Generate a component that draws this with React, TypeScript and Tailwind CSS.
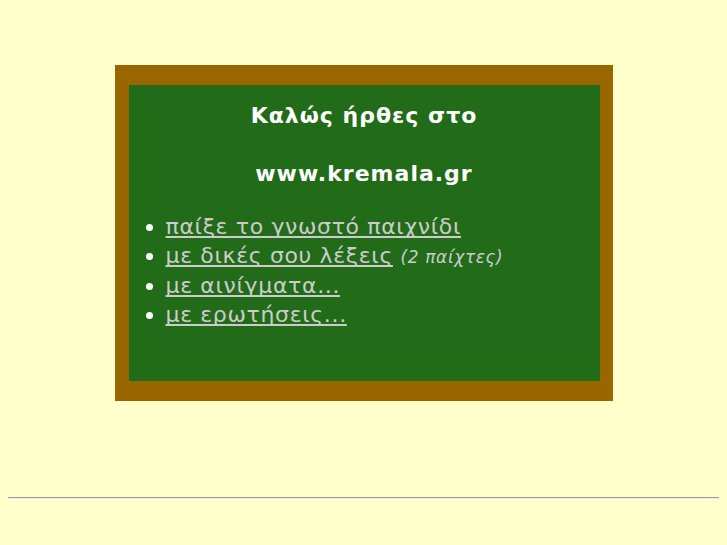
export default function App() {
  const f = { fontFamily: '"DejaVu Sans", sans-serif' };
  const a = "text-[#cccccc] underline underline-offset-[2px] [text-decoration-skip-ink:none]";
  return (
    <div className="min-h-[545px] bg-[#ffffcc] px-[8px] pt-[65px]" style={f}>
      <div className="mx-auto w-[498px] h-[336px] bg-[#996600] pl-[14px] pr-[13px] py-[20px]">
        <div className="h-full bg-[#226b18] pt-[16px] pl-[17px]">
          <div className="text-center text-white font-bold text-[22px] leading-[29px] tracking-[1px] pr-[17px]">
            <div>Καλώς ήρθες στο</div>
            <div className="mt-[29px]">www.kremala.gr</div>
          </div>
          <ul className="mt-[24px] list-disc pl-[20px] text-white text-[22px] leading-[29.3px] tracking-[0.65px]">
            <li className="h-[29.3px]"><a href="#" className={a}>παίξε το γνωστό παιχνίδι</a></li>
            <li className="h-[29.3px]"><a href="#" className={a}>με δικές σου λέξεις</a> <span className="italic text-[#cccccc] text-[17px] leading-none tracking-[0.6px]">(2 παίχτες)</span></li>
            <li className="h-[29.3px]"><a href="#" className={a}>με αινίγματα...</a></li>
            <li className="h-[29.3px]"><a href="#" className={a}>με ερωτήσεις...</a></li>
          </ul>
        </div>
      </div>
      <div className="mt-[96px] border-t border-t-[#9a9a9a] border-b border-b-[#eeeeee] h-[2px]" />
    </div>
  );
}
